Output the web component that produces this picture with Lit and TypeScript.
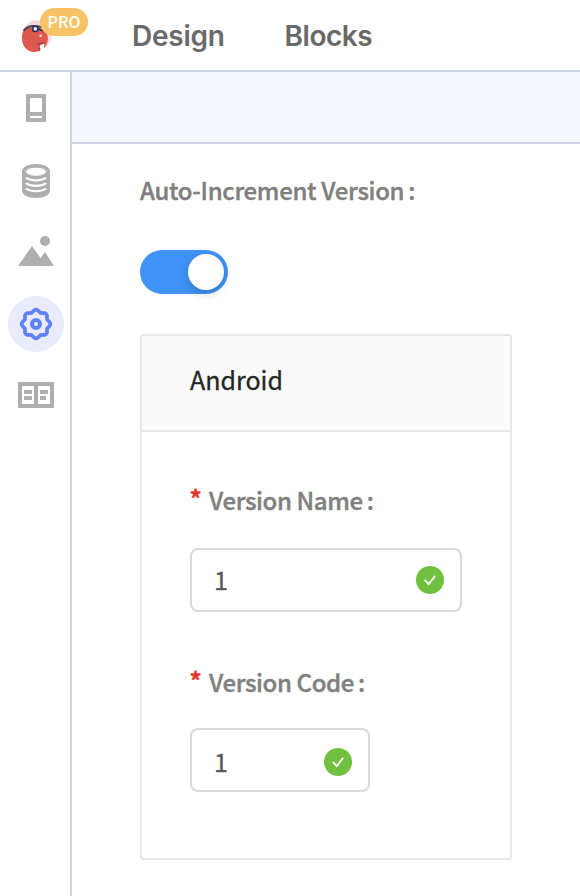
import { LitElement, html, css, svg } from "lit";
import { customElement, property } from "lit/decorators.js";

// Closed outline of a cog with eight rounded teeth.
const cogPath = (() => {
  const pts: string[] = [];
  for (let i = 0; i < 144; i++) {
    const t = (i / 144) * Math.PI * 2;
    const r = 13.2 + 1.1 * Math.cos(8 * t);
    pts.push(`${(18 + r * Math.cos(t)).toFixed(2)} ${(18 + r * Math.sin(t)).toFixed(2)}`);
  }
  return `M${pts.join("L")}Z`;
})();

const icons = {
  screen: svg`<path fill-rule="evenodd" d="M9 4h18a1 1 0 0 1 1 1v26a1 1 0 0 1-1 1H9a1 1 0 0 1-1-1V5a1 1 0 0 1 1-1zM12 8v14h12V8zM12 26v2h12v-2z"/>`,
  data: svg`<path d="M4 9.500C4 5 10 2 18 2s14 3 14 7.500V28.500C32 33 26 36 18 36S4 33 4 28.500z"/>
    <ellipse cx="18" cy="9.700" rx="10" ry="4" fill="#fff"/>
    <g fill="none" stroke="#fff" stroke-width="2.100" stroke-linecap="round"><path d="M8.500 16.200c4.500 3 14.500 3 19 0M8.500 21.600c4.500 3 14.500 3 19 0M8.500 27c4.500 3 14.500 3 19 0"/></g>`,
  media: svg`<circle cx="27" cy="7" r="5"/><path d="M0 32 14 12l8.500 12L27 18l9 14z"/>`,
  settings: svg`<path d=${cogPath} fill="none" stroke="#5f80f7" stroke-width="3.700" stroke-linejoin="round"/><circle cx="18" cy="18" r="4" fill="none" stroke="#5f80f7" stroke-width="4"/>`,
  docs: svg`<path fill-rule="evenodd" d="M0 4h36v26H0zM4 8v18h12V8zM20 8v18h12V8z"/><path d="M6 12h8v4H6zM6 18h8v4H6zM22 12h8v4h-8zM22 18h6v4h-6z"/>`,
};

@customElement("version-field")
class VersionField extends LitElement {
  @property() label = "";
  @property() value = "";
  static styles = css`
    :host { display: block; }
    .label { display: flex; height: 32px; font-size: 24px; line-height: 32px; font-weight: 500; color: #808080; letter-spacing: -0.38px; -webkit-text-stroke: 0.4px #808080; }
    .star { width: 19px; color: #e5352f; font-weight: 700; line-height: 28px; text-indent: -0.5px; -webkit-text-stroke: 0.4px #e5352f; }
    .colon { margin-left: 4px; }
    .box { box-sizing: border-box; height: 64px; margin-top: var(--box-gap, 32px); border: 2px solid #d9d9d9; border-radius: 8px; display: flex; align-items: center; justify-content: space-between; padding: var(--box-drop, 0) 16px 0 22px; color: #595959; font-size: 25px; }
    .value { line-height: 36px; padding-bottom: 3px; -webkit-text-stroke: 0.3px #595959; }
    .check { width: 28px; height: 28px; display: block; }
  `;
  render() {
    return html`<div class="label"><span class="star">*</span><span>${this.label}</span><span class="colon">:</span></div>
      <div class="box"><span class="value">${this.value}</span>
        <svg class="check" viewBox="0 0 28 28"><circle cx="14" cy="14" r="14" fill="#71c040"/><path d="M8.800 13.800 12.700 18.200 19.200 9.800" fill="none" stroke="#fff" stroke-width="1.800"/></svg>
      </div>`;
  }
}

@customElement("app-root")
class AppRoot extends LitElement {
  static styles = css`
    :host { display: flex; flex-direction: column; height: 896px; overflow: hidden; background: #fff; font-family: "Noto Sans CJK SC", "Noto Sans", sans-serif; }
    .top { box-sizing: border-box; height: 72px; flex: none; border-bottom: 2px solid #d0d5e6; display: flex; align-items: center; }
    .brand { position: relative; width: 132px; height: 70px; }
    .logo { display: block; width: 32px; height: 34px; margin: 19px 0 0 20px; }
    .pro { position: absolute; left: 40px; top: 8px; width: 48px; height: 28px; border-radius: 14px; background: #f6c467; color: #fff; font-size: 16px; font-weight: 500; line-height: 27px; text-align: center; }
    nav { display: flex; font: 600 28px/36px Inter, sans-serif; color: #696969; padding-top: 2px; }
    .design { width: 152px; letter-spacing: -0.25px; }
    .blocks { letter-spacing: -0.45px; padding-left: 0.5px; }
    .body { flex: 1; display: flex; min-height: 0; }
    aside { box-sizing: border-box; width: 72px; border-right: 2px solid #d0d5e6; display: flex; flex-direction: column; align-items: flex-start; padding: 8px 0 0 8px; gap: 16px; }
    .item { width: 56px; height: 56px; border-radius: 50%; display: flex; align-items: center; justify-content: center; }
    .item svg { width: 36px; height: 36px; fill: #afafaf; display: block; }
    .active { background: #e8ecfd; }
    main { flex: 1; }
    .bar { height: 70px; background: #f7f8fd; border-bottom: 2px solid #d0d5e6; }
    .content { padding: 30px 68px 0; }
    .label { display: flex; font-size: 24px; line-height: 32px; font-weight: 500; color: #808080; letter-spacing: -0.33px; -webkit-text-stroke: 0.4px #808080; }
    .colon { margin-left: 4px; }
    .switch { box-sizing: border-box; width: 88px; height: 44px; border-radius: 22px; background: #3f92f8; margin-top: 44px; padding: 4px; display: flex; justify-content: flex-end; }
    .knob { width: 36px; height: 36px; border-radius: 50%; background: #fff; box-shadow: 0 4px 8px rgba(0, 35, 11, 0.2); }
    .card { box-sizing: border-box; width: 372px; height: 526px; margin-top: 40px; border: 2px solid #e8e8e8; border-radius: 4px; }
    .head { height: 94px; background: #fafafa; border-bottom: 2px solid #e8e8e8; padding-left: 48px; font-size: 25px; line-height: 86px; color: #262626; -webkit-text-stroke: 0.3px #262626; }
    .fields { padding: 52px 48px 0; }
    .code { width: 180px; margin-top: 54px; --box-gap: 30px; --box-drop: 4px; }
  `;
  render() {
    return html`
      <header class="top">
        <div class="brand">
          <svg class="logo" viewBox="0 0 32 34">
            <circle cx="17" cy="16" r="14.700" fill="#f5dcdf"/>
            <path d="M2 21C1 13 5 9 10 8.500c8-1 15 1 17 6 1.500 4 1 8-.5 11C24 31 19 33 13 33 6 32 3 27 2 21z" fill="#de584e"/>
            <path d="M3.500 12c3-4 7-5 10-5s9 1 14 3" fill="none" stroke="#4b3a5c" stroke-width="2"/>
            <circle cx="15.300" cy="9.800" r="2.700" fill="#e9edff" stroke="#333061" stroke-width="1.700"/>
            <path d="M18.500 9.500c2 2.500 5 2.500 8 1.500" fill="none" stroke="#333061" stroke-width="1.700"/>
            <circle cx="20.700" cy="16.800" r="1.400" fill="#f8c9c5"/>
            <path d="M20 26 24.500 24.500 24 28 26.500 33H20z" fill="#fff"/><path d="M17.500 25.500 24.500 23.800M19.700 29v2.500" fill="none" stroke="#8b4052" stroke-width="1.300"/>
          </svg>
          <span class="pro">PRO</span>
        </div>
        <nav><span class="design">Design</span><span class="blocks">Blocks</span></nav>
      </header>
      <div class="body">
        <aside>
          ${Object.entries(icons).map(([name, art]) => html`<div class="item ${name === "settings" ? "active" : ""}"><svg viewBox="0 0 36 36">${art}</svg></div>`)}
        </aside>
        <main>
          <div class="bar"></div>
          <div class="content">
            <div class="label"><span>Auto-Increment Version</span><span class="colon">:</span></div>
            <div class="switch"><div class="knob"></div></div>
            <section class="card">
              <div class="head">Android</div>
              <div class="fields">
                <version-field label="Version Name" value="1"></version-field>
                <version-field class="code" label="Version Code" value="1"></version-field>
              </div>
            </section>
          </div>
        </main>
      </div>`;
  }
}
